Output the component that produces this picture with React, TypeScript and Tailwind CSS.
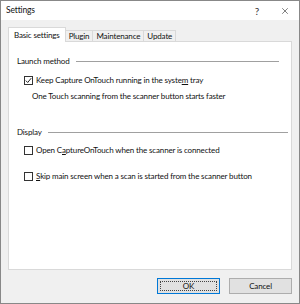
import { X } from "lucide-react";

function Check({ checked }: { checked?: boolean }) {
  return (
    <span className="w-[9px] h-[9px] border border-[#333333] bg-white flex items-center justify-center shrink-0">
      {checked && (
        <svg width="7" height="7" viewBox="0 0 7 7">
          <path d="M0.8 3.6 L2.7 5.5 L6.2 1.2" fill="none" stroke="#222" strokeWidth="1" />
        </svg>
      )}
    </span>
  );
}

function Section({ title }: { title: string }) {
  return (
    <div className="flex items-center h-[12px] gap-[6px]">
      <span>{title}</span>
      <span className="flex-1 h-px bg-[#a0a0a0]" />
    </div>
  );
}

const tabs = ["Basic settings", "Plugin", "Maintenance", "Update"];

export default function App() {
  return (
    <div className="w-[300px] h-[304px] bg-[#f0f0f0] border border-[#888888] flex flex-col text-[8px] tracking-[-0.15px] text-[#111] font-['Lato',sans-serif] leading-none">
      <div className="h-[19px] bg-white flex items-center pl-[5px] pr-[9px] shrink-0">
        <span className="text-[8.5px]">Settings</span>
        <span className="ml-auto text-[10px] text-[#333]">?</span>
        <X className="ml-[21px] w-[10px] h-[10px] text-[#333]" strokeWidth={1.5} />
      </div>

      <div className="flex-1 flex flex-col px-[7px] pt-[7px]">
        <div className="flex items-end h-[15px] relative z-10">
          {tabs.map((t, i) =>
            i === 0 ? (
              <div key={t} className="h-[15px] px-[5px] flex items-center bg-white border border-b-0 border-[#d9d9d9]">
                {t}
              </div>
            ) : (
              <div key={t} className="h-[12px] px-[3px] flex items-center bg-[#f0f0f0] border border-l-0 border-[#d9d9d9]">
                {t}
              </div>
            )
          )}
        </div>

        <div className="h-[229px] -mt-px bg-white border border-[#d9d9d9] flex flex-col pl-[8px]">
          <div className="mt-[13px] pr-[12px]">
            <Section title="Launch method" />
          </div>
          <label className="mt-[7px] h-[12px] flex items-center pl-[7px] gap-[3px]">
            <Check checked />
            <span>
              Keep Capture OnTouch running in the syste<u>m</u> tray
            </span>
          </label>
          <div className="mt-[4px] h-[12px] flex items-center pl-[15px]">
            One Touch scanning from the scanner button starts faster
          </div>

          <div className="mt-[24px] pr-[3px]">
            <Section title="Display" />
          </div>
          <label className="mt-[6px] h-[12px] flex items-center pl-[7px] gap-[3px]">
            <Check />
            <span>
              Open C<u>a</u>ptureOnTouch when the scanner is connected
            </span>
          </label>
          <label className="mt-[14px] h-[12px] flex items-center pl-[7px] gap-[3px]">
            <Check />
            <span>
              <u>S</u>kip main screen when a scan is started from the scanner button
            </span>
          </label>
        </div>

        <div className="flex justify-end gap-[9px] mt-[8px]">
          <button className="w-[63px] h-[16px] bg-[#e1e1e1] border border-[#0078d7] p-[2px]">
            <span className="w-full h-full flex items-center justify-center border border-dotted border-[#444]">
              OK
            </span>
          </button>
          <button className="w-[63px] h-[16px] bg-[#e1e1e1] border border-[#adadad] flex items-center justify-center">
            Cancel
          </button>
        </div>
      </div>
    </div>
  );
}
